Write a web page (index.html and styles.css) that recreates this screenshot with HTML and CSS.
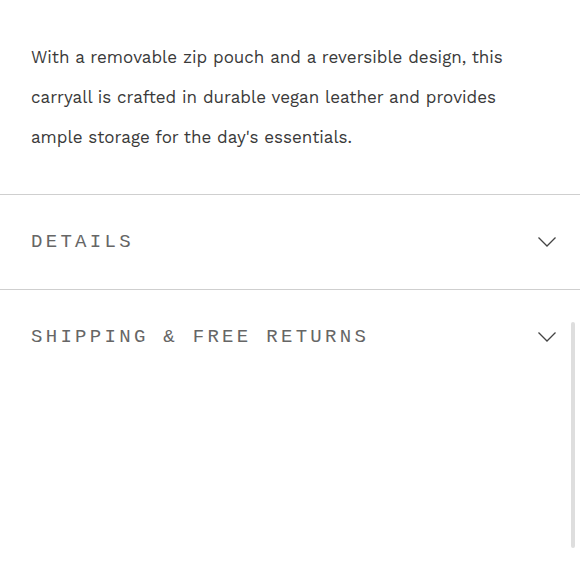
FILE: index.html
```html
<!DOCTYPE html>
<html>
<head>
  <title>Product info</title>
  <link rel="stylesheet" href="styles.css">
</head>
<body>
  <p class="description">
    With a removable zip pouch and a reversible design, this
    carryall is crafted in durable vegan leather and provides
    ample storage for the day's essentials.
  </p>

  <div class="accordion">
    <div class="accordion-row">
      <span class="accordion-title">DETAILS</span>
      <svg class="chevron" width="18" height="10" viewBox="0 0 18 10">
        <polyline points="0.5,0.5 9,9 17.5,0.5" />
      </svg>
    </div>
    <div class="accordion-row">
      <span class="accordion-title">SHIPPING &amp; FREE RETURNS</span>
      <svg class="chevron" width="18" height="10" viewBox="0 0 18 10">
        <polyline points="0.5,0.5 9,9 17.5,0.5" />
      </svg>
    </div>
  </div>

  <div class="scroll-thumb"></div>
</body>
</html>
```

FILE: styles.css
```css
body {
  margin: 0;
  width: 580px;
  height: 580px;
  background-color: #fff;
  font-family: "Work Sans", Lato, "Noto Sans", sans-serif;
  color: #333;
  position: relative;
  overflow: hidden;
}

.description {
  margin: 0;
  padding: 37px 60px 37px 31px;
  font-size: 17px;
  line-height: 40px;
  color: #3a3a3a;
}

.accordion-row {
  display: flex;
  align-items: center;
  justify-content: space-between;
  height: 94px;
  padding: 0 24px 0 31px;
  border-top: 1px solid #cfcfcf;
}

.accordion-title {
  font-family: "Liberation Mono", "DejaVu Sans Mono", monospace;
  font-size: 19px;
  letter-spacing: 3.3px;
  color: #666;
}

.chevron {
  fill: none;
  stroke: #444;
  stroke-width: 1.3;
}

.scroll-thumb {
  position: absolute;
  top: 322px;
  right: 5px;
  width: 4px;
  height: 226px;
  border-radius: 2px;
  background-color: #dedede;
}
```
